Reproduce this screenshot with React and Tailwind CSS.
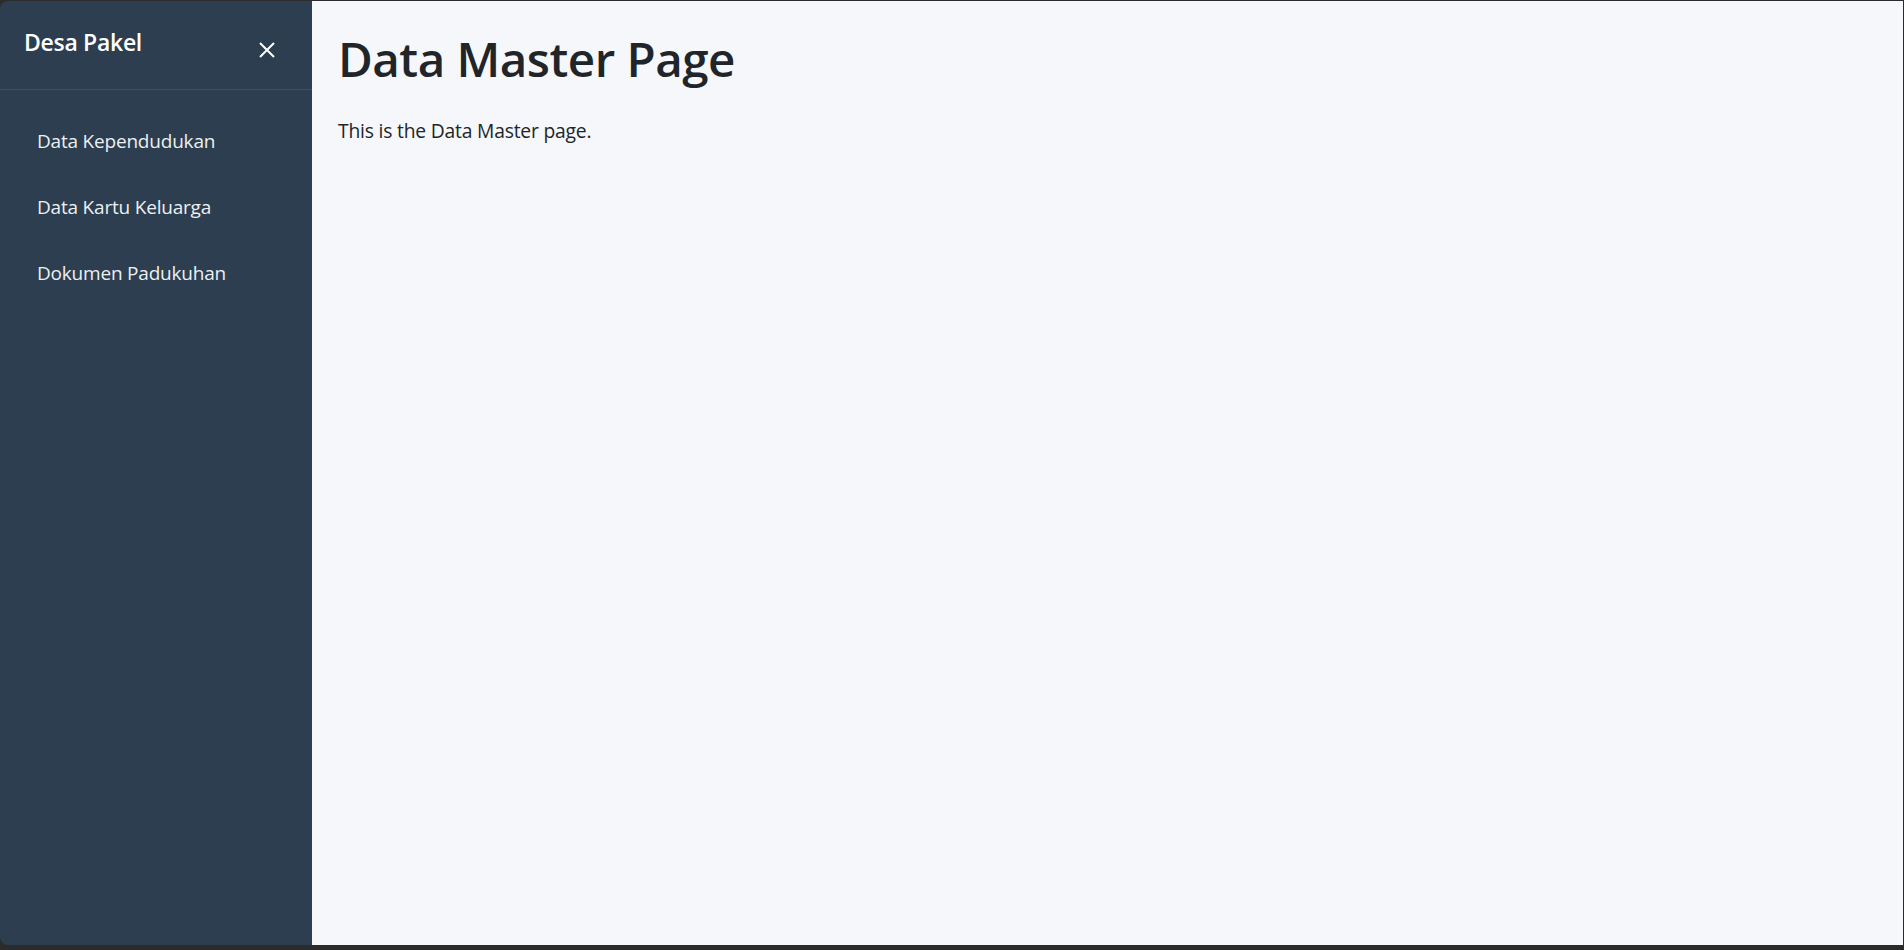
import { useState } from 'react';

const menuItems = ['Data Kependudukan', 'Data Kartu Keluarga', 'Dokumen Padukuhan'];

const App = () => {
  const [active, setActive] = useState(null);

  return (
    <div
      className="h-[950px] w-full bg-[#2b2b2b] pt-px pb-[5px] flex overflow-hidden"
      style={{ fontFamily: '"Open Sans", "Noto Sans", sans-serif' }}
    >
      <aside className="w-[312px] shrink-0 bg-[#2c3e50] text-white rounded-tl-lg rounded-bl-lg flex flex-col">
        <div className="h-[89px] flex items-start justify-between pl-[24px] pr-[37px] pt-[24px] border-b border-[#415164]">
          <h2 className="text-[23px] font-semibold tracking-[-0.3px]">Desa Pakel</h2>
          <button className="mt-[17px] text-white">
            <svg width="16" height="16" viewBox="0 0 16 16" fill="none" stroke="currentColor" strokeWidth="2">
              <path d="M1 1L15 15M15 1L1 15" />
            </svg>
          </button>
        </div>
        <nav className="flex flex-col pt-[18px]">
          {menuItems.map((item) => (
            <button
              key={item}
              onClick={() => setActive(item)}
              className={`text-left pl-[37px] h-[66px] text-[19px] tracking-[-0.2px] text-[#ecf0f1] hover:bg-[#34495e] ${active === item ? 'bg-[#34495e]' : ''}`}
            >
              {item}
            </button>
          ))}
        </nav>
      </aside>
      <main className="flex-1 bg-[#f5f7fb] pl-[26px] pt-[29px] text-[#212529] mr-px">
        <h1 className="text-[47.5px] font-semibold leading-[1.2] tracking-[-0.5px]">Data Master Page</h1>
        <p className="mt-[30px] text-[19.3px] tracking-[-0.2px]">This is the Data Master page.</p>
      </main>
    </div>
  );
};

export default App;
